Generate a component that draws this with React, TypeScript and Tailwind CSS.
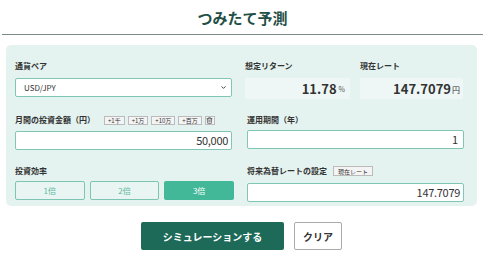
import { Trash2, ChevronDown } from 'lucide-react';

const font = { fontFamily: '"Noto Sans CJK JP", "Noto Sans", sans-serif' };

export default function App() {
  const addButtons = ['+1千', '+1万', '+10万', '+百万'];
  const rates = ['1倍', '2倍', '3倍'];

  return (
    <div className="w-[500px] h-[263px] bg-white text-[#333]" style={font}>
      <div className="w-[481px] ml-[2px]">
        {/* タイトル */}
        <h1 className="h-[35px] flex items-center justify-center pt-[2px] text-[15px] font-bold text-[#1f4f46] border-b border-[#7d8b88]">
          つみたて予測
        </h1>

        {/* 入力パネル */}
        <div className="mt-[10px] ml-[4px] w-[471px] h-[161px] bg-[#e5f3f0] rounded-[5px] pl-[9px] pr-[12px] pt-[14px]">
          <div className="grid grid-cols-[217px_217px] gap-x-[15px]">
            {/* 通貨ペア */}
            <div>
              <div className="h-[14px] text-[8px] font-bold leading-[14px]">通貨ペア</div>
              <div className="mt-[5px] h-[19px] bg-white border border-[#80c6b5] rounded-[2px] flex items-center justify-between pl-[8px] pr-[4px]">
                <span className="text-[8px]">USD/JPY</span>
                <ChevronDown size={7} strokeWidth={3} />
              </div>
            </div>
            <div className="grid grid-cols-[105px_103px] gap-x-[10px] -ml-[2px]">
              <div>
                <div className="h-[14px] text-[8px] font-bold leading-[14px]">想定リターン</div>
                <div className="mt-[5px] h-[21px] bg-[#eef7f5] flex items-center justify-end pr-[5px]">
                  <span className="text-[13px] font-bold">11.78</span>
                  <span className="text-[7px] ml-[2px] mt-[2px] text-[#555]">%</span>
                </div>
              </div>
              <div>
                <div className="h-[14px] text-[8px] font-bold leading-[14px]">現在レート</div>
                <div className="mt-[5px] h-[21px] bg-[#eef7f5] flex items-center justify-end pr-[3px]">
                  <span className="text-[13px] font-bold">147.7079</span>
                  <span className="text-[8px] ml-[1px] mt-[2px]">円</span>
                </div>
              </div>
            </div>

            {/* 月間の投資金額 */}
            <div className="mt-[14px]">
              <div className="h-[14px] flex items-center gap-[3px]">
                <span className="text-[8px] font-bold mr-[6px]">月間の投資金額（円）</span>
                {addButtons.map((b) => (
                  <span key={b} className="h-[9px] px-[3px] bg-[#f4f4f4] border border-[#bbb] text-[6px] leading-[7px] flex items-center">
                    {b}
                  </span>
                ))}
                <span className="h-[9px] w-[10px] bg-[#f4f4f4] border border-[#bbb] flex items-center justify-center">
                  <Trash2 size={7} strokeWidth={2} />
                </span>
              </div>
              <div className="mt-[4px] h-[19px] bg-white border border-[#80c6b5] rounded-[2px] flex items-center justify-end pr-[3px] text-[11px] tracking-[-0.3px]">
                50,000
              </div>
            </div>
            <div className="mt-[14px]">
              <div className="h-[14px] text-[8px] font-bold leading-[14px]">運用期間（年）</div>
              <div className="mt-[3px] h-[19px] bg-white border border-[#80c6b5] rounded-[2px] flex items-center justify-end pr-[5px] text-[11px]">
                1
              </div>
            </div>

            {/* 投資効率 */}
            <div className="mt-[14px]">
              <div className="h-[14px] text-[8px] font-bold leading-[14px]">投資効率</div>
              <div className="mt-[3px] grid grid-cols-3 gap-[5px] w-[219px]">
                {rates.map((r, i) => (
                  <div
                    key={r}
                    className={
                      i === 2
                        ? 'h-[19px] rounded-[2px] bg-[#43b899] text-white text-[8px] flex items-center justify-center'
                        : 'h-[19px] rounded-[2px] border border-[#7cc5b3] bg-[#e9f5f2] text-[#5cb8a1] text-[8px] flex items-center justify-center'
                    }
                  >
                    {r}
                  </div>
                ))}
              </div>
            </div>
            <div className="mt-[14px]">
              <div className="h-[14px] flex items-center">
                <span className="text-[8px] font-bold mr-[6px]">将来為替レートの設定</span>
                <span className="h-[10px] px-[4px] bg-[#f4f4f4] border border-[#bbb] text-[6px] flex items-center">
                  現在レート
                </span>
              </div>
              <div className="mt-[5px] h-[19px] bg-white border border-[#80c6b5] rounded-[2px] flex items-center justify-end pr-[3px] text-[11px] tracking-[-0.3px]">
                147.7079
              </div>
            </div>
          </div>
        </div>

        {/* ボタン */}
        <div className="mt-[16px] flex ml-[139px] gap-[10px]">
          <button className="w-[143px] h-[28px] bg-[#1c6a57] rounded-[2px] text-white text-[10px] font-bold">
            シミュレーションする
          </button>
          <button className="w-[48px] h-[28px] bg-white border border-[#aaa] rounded-[2px] text-[#333] text-[10px] font-bold">
            クリア
          </button>
        </div>
      </div>
    </div>
  );
}
